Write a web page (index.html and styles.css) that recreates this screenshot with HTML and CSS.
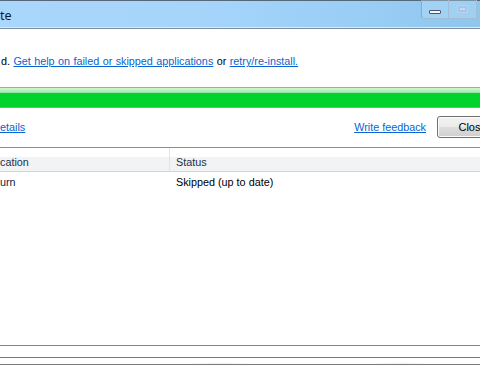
FILE: index.html
```html
<!DOCTYPE html>
<html>
<head>
<meta charset="utf-8">
<link rel="stylesheet" href="styles.css">
</head>
<body>
<div class="window">
  <div class="titlebar">
    <span class="title">te</span>
    <div class="caption-buttons">
      <div class="cbtn cbtn-min"><span class="min-glyph"></span></div>
      <div class="cbtn cbtn-max"><span class="max-glyph"></span></div>
    </div>
  </div>
  <div class="titleline"></div>
  <div class="content">
    <p class="message">d. <a href="#">Get help on failed or skipped applications</a> or <a href="#">retry/re-install.</a></p>
    <div class="progress"><div class="progress-fill"></div></div>
    <div class="actions">
      <a href="#" class="details">etails</a>
      <div class="actions-right">
        <a href="#">Write feedback</a>
        <button class="close-btn">Close</button>
      </div>
    </div>
    <div class="separator"></div>
    <div class="list">
      <div class="list-header">
        <div class="col col-app">cation</div>
        <div class="col col-status">Status</div>
      </div>
      <div class="list-row">
        <div class="col col-app app-name">urn</div>
        <div class="col col-status">Skipped (up to date)</div>
      </div>
    </div>
    <div class="statusbar"></div>
  </div>
</div>
</body>
</html>
```
FILE: styles.css
```css
* { box-sizing: border-box; }
html, body {
  margin: 0;
  padding: 0;
  width: 480px;
  height: 366px;
  overflow: hidden;
  background: #ffffff;
}
body {
  font-family: "Liberation Sans", Arial, sans-serif;
  font-size: 10.8px;
  color: #000;
}
.window {
  width: 480px;
  height: 366px;
  display: flex;
  flex-direction: column;
}
.titlebar {
  position: relative;
  height: 27px;
  border-top: 1px solid #56677a;
  background: linear-gradient(90deg, #a9d7fb 0%, #a6d5fa 40%, #9bcff6 70%, #8fc6ee 100%);
  display: flex;
  align-items: center;
}
.title {
  font-family: "Noto Sans", "DejaVu Sans", sans-serif;
  font-size: 12.5px;
  color: #0c1a2a;
  margin-top: 3px;
}
.caption-buttons {
  position: absolute;
  top: -1px;
  left: 421px;
  display: flex;
}
.cbtn {
  height: 19px;
  border-right: 1px solid #a3bdd6;
  border-bottom: 1px solid #a3bdd6;
  display: flex;
  align-items: center;
  justify-content: center;
  background: rgba(190, 225, 250, 0.35);
}
.cbtn-min {
  width: 28px;
  border-left: 1px solid #8ea7c2;
  border-bottom-left-radius: 4px;
}
.cbtn-max {
  width: 28px;
}
.min-glyph {
  display: block;
  width: 12px;
  height: 4px;
  margin-top: 6px;
  background: #f4f6f8;
  border: 1px solid #4b5566;
  border-radius: 1px;
}
.max-glyph {
  display: block;
  width: 11px;
  height: 8px;
  border: 1px solid #b9d3ea;
  box-shadow: inset 0 0 0 2px #a5c6e6;
  background: #c2dcf2;
}
.titleline {
  height: 2px;
  border-top: 1px solid #d6ecfb;
  border-bottom: 1px solid #7d8d9e;
}
.content {
  flex: 1;
  display: flex;
  flex-direction: column;
}
.message {
  margin: 24px 0 0 1px;
  height: 16px;
  line-height: 16px;
  white-space: nowrap;
  word-spacing: 0.4px;
}
a {
  color: #0a63d0;
  text-decoration: underline;
}
.progress {
  margin-top: 18px;
  height: 21px;
  border-top: 1px solid #a4a7a4;
  border-bottom: 1px solid #9a9e9a;
  background: linear-gradient(180deg, #d0f6d0 0px, #b4f0b8 3px, #8fe49a 5px, #00d42c 5px, #00d22a 100%);
}
.progress-fill { height: 100%; }
.actions {
  margin-top: 8px;
  height: 22px;
  display: flex;
  align-items: center;
  justify-content: space-between;
}
.actions-right {
  display: flex;
  align-items: center;
  gap: 11px;
  margin-right: -32px;
}
.close-btn {
  width: 75px;
  height: 22px;
  font-family: "Liberation Sans", Arial, sans-serif;
  font-size: 11px;
  color: #000;
  border: 1px solid #707070;
  border-radius: 3px;
  background: linear-gradient(180deg, #f2f2f2 0%, #ebebeb 50%, #dddddd 51%, #cfcfcf 100%);
  box-shadow: inset 0 0 0 1px #fcfcfc;
  padding: 0 4px 0 0;
}
.separator {
  margin-top: 9px;
  height: 1px;
  background: #8c8c8c;
}
.list {
  height: 198px;
  border-bottom: 1px solid #82838c;
}
.list-header {
  display: flex;
  height: 24px;
  background: linear-gradient(180deg, #ffffff 0%, #ffffff 40%, #f2f3f5 41%, #f1f2f4 100%);
  border-bottom: 1px solid #d5d5d5;
  color: #1e2f45;
}
.list-header .col {
  line-height: 22px;
  padding-top: 3px;
}
.col-app {
  width: 170px;
  border-right: 1px solid #e2e3e5;
  white-space: nowrap;
}
.list-row .col-app { border-right: none; }
.col-status {
  padding-left: 6px;
  white-space: nowrap;
}
.list-row {
  display: flex;
  height: 21px;
  line-height: 21px;
}
.app-name { color: #0e2446; }
.statusbar {
  margin-top: 11px;
  height: 8px;
  border-top: 1px solid #7a7a80;
  border-bottom: 1px solid #7a7a80;
  background: radial-gradient(ellipse 40px 3px at 220px 7px, #e4e4e4, transparent),
              radial-gradient(ellipse 40px 3px at 400px 7px, #e8e8e8, transparent),
              #ffffff;
}
```
